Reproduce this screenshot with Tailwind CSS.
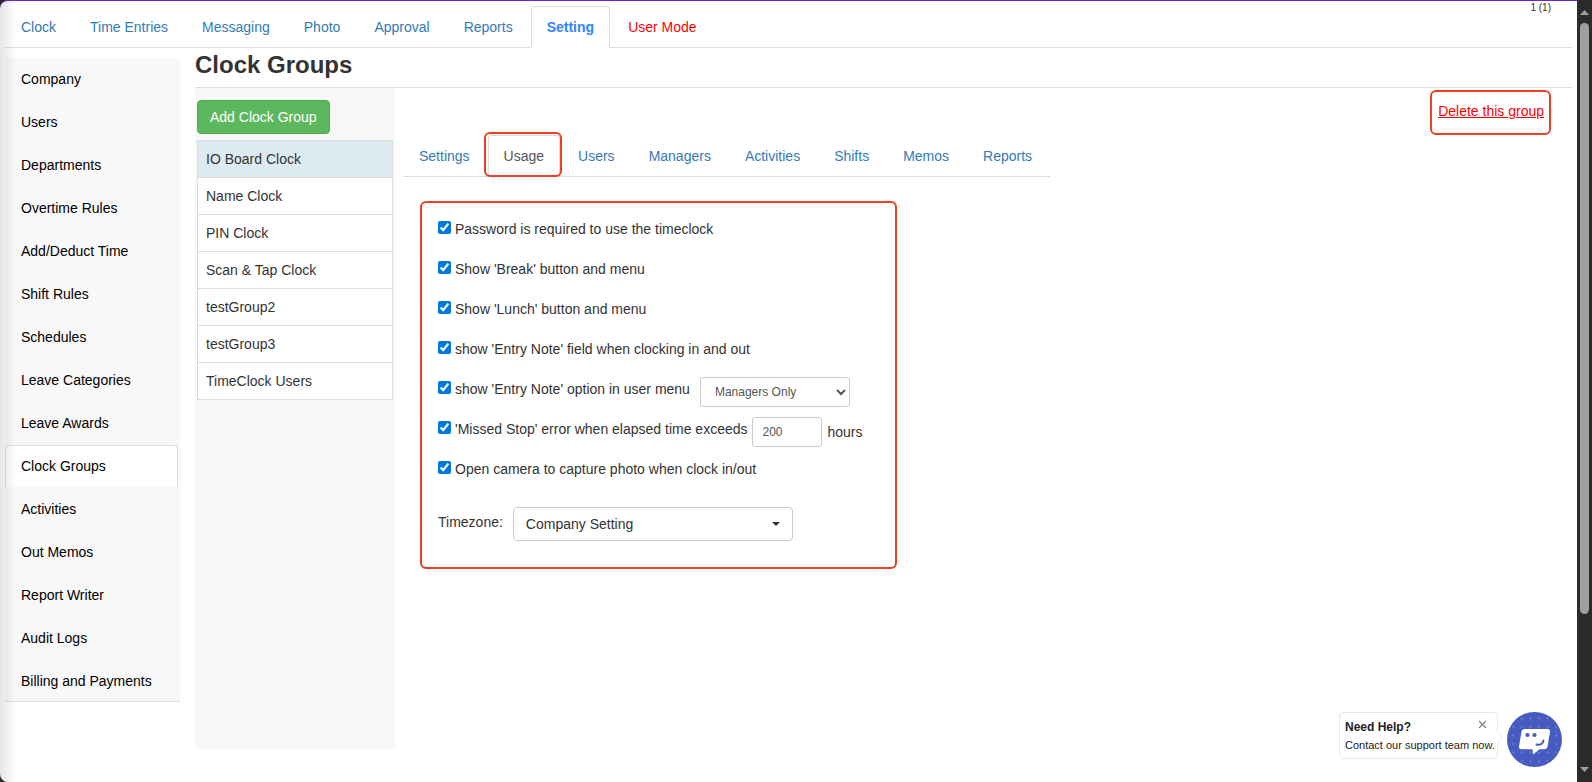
<!DOCTYPE html>
<html lang="en">
<head>
<meta charset="utf-8">
<title>Clock Groups</title>
<script src="https://cdn.jsdelivr.net/npm/@tailwindcss/browser@4"></script>
</head>
<body class="flex h-screen overflow-hidden bg-[#2b2b2b] font-['Liberation_Sans',Arial,sans-serif] text-sm leading-5 text-[#333]">

<div class="relative flex min-w-0 flex-1 flex-col overflow-hidden rounded-l-lg border-t border-[#6427d8] bg-white pl-[5px] pr-[5px] pt-[5px]">
  <div class="pointer-events-none absolute inset-y-0 left-0 z-10 w-4 bg-linear-to-r from-black/10 to-transparent"></div>
  <span class="absolute right-[26px] top-0 text-[10px] leading-[14px]">1 (1)</span>

  <nav aria-label="Main" class="flex shrink-0 gap-[2px] border-b border-[#ddd]">
    <a href="#" class="-mb-px border border-transparent px-[15px] py-[10px] text-[#337ab7]">Clock</a>
    <a href="#" class="-mb-px border border-transparent px-[15px] py-[10px] text-[#337ab7]">Time Entries</a>
    <a href="#" class="-mb-px border border-transparent px-[15px] py-[10px] text-[#337ab7]">Messaging</a>
    <a href="#" class="-mb-px border border-transparent px-[15px] py-[10px] text-[#337ab7]">Photo</a>
    <a href="#" class="-mb-px border border-transparent px-[15px] py-[10px] text-[#337ab7]">Approval</a>
    <a href="#" class="-mb-px border border-transparent px-[15px] py-[10px] text-[#337ab7]">Reports</a>
    <a href="#" aria-current="page" class="-mb-px rounded-t border border-[#ddd] border-b-white bg-white px-[15px] py-[10px] font-bold text-[#2e86ff]">Setting</a>
    <a href="#" class="-mb-px border border-transparent px-[15px] py-[10px] text-[#ff0000]">User Mode</a>
  </nav>

  <div class="flex min-h-0 flex-1 gap-[15px]">
    <nav aria-label="Settings" class="mt-[10px] flex w-[175px] shrink-0 flex-col gap-px self-start border-b border-[#ddd] bg-[#f8f8f8] text-black">
      <a href="#" class="mr-[2px] border border-transparent px-[15px] py-[10px]">Company</a>
      <a href="#" class="mr-[2px] border border-transparent px-[15px] py-[10px]">Users</a>
      <a href="#" class="mr-[2px] border border-transparent px-[15px] py-[10px]">Departments</a>
      <a href="#" class="mr-[2px] border border-transparent px-[15px] py-[10px]">Overtime Rules</a>
      <a href="#" class="mr-[2px] border border-transparent px-[15px] py-[10px]">Add/Deduct Time</a>
      <a href="#" class="mr-[2px] border border-transparent px-[15px] py-[10px]">Shift Rules</a>
      <a href="#" class="mr-[2px] border border-transparent px-[15px] py-[10px]">Schedules</a>
      <a href="#" class="mr-[2px] border border-transparent px-[15px] py-[10px]">Leave Categories</a>
      <a href="#" class="mr-[2px] border border-transparent px-[15px] py-[10px]">Leave Awards</a>
      <a href="#" aria-current="page" class="mr-[2px] rounded-t border border-[#ddd] border-b-transparent bg-white px-[15px] py-[10px]">Clock Groups</a>
      <a href="#" class="mr-[2px] border border-transparent px-[15px] py-[10px]">Activities</a>
      <a href="#" class="mr-[2px] border border-transparent px-[15px] py-[10px]">Out Memos</a>
      <a href="#" class="mr-[2px] border border-transparent px-[15px] py-[10px]">Report Writer</a>
      <a href="#" class="mr-[2px] border border-transparent px-[15px] py-[10px]">Audit Logs</a>
      <a href="#" class="-mb-px mr-[2px] border border-transparent px-[15px] py-[10px]">Billing and Payments</a>
    </nav>

    <main class="flex min-w-0 flex-1 flex-col pb-[33px]">
      <h1 class="border-b border-[#ddd] pb-2 pt-[3px] text-2xl leading-7 font-bold">Clock Groups</h1>
      <div class="flex min-h-0 flex-1">
        <section aria-label="Clock group list" class="w-[200px] shrink-0 bg-[#f8f8f8] px-[2px] pt-3">
          <button type="button" class="rounded border border-[#4cae4c] bg-[#5cb85c] px-3 py-[6px] text-white">Add Clock Group</button>
          <ul class="mt-[6px] divide-y divide-[#ddd] border border-[#ddd] bg-white">
            <li class="bg-[#deeaf2]"><a href="#" class="block p-2">IO Board Clock</a></li>
            <li><a href="#" class="block p-2">Name Clock</a></li>
            <li><a href="#" class="block p-2">PIN Clock</a></li>
            <li><a href="#" class="block p-2">Scan &amp; Tap Clock</a></li>
            <li><a href="#" class="block p-2">testGroup2</a></li>
            <li><a href="#" class="block p-2">testGroup3</a></li>
            <li><a href="#" class="block p-2">TimeClock Users</a></li>
          </ul>
        </section>

        <section aria-label="Group settings" class="flex min-w-0 flex-1 flex-col items-start pl-2 pr-[21px] pt-[2px]">
          <a href="#" class="self-end rounded-md border-2 border-[#ee3f24] pb-3 pl-[6px] pr-[5px] pt-[9px] text-[#ff0000] underline">Delete this group</a>

          <nav aria-label="Group" class="flex gap-[2px] border-b border-[#ddd] pr-[2px]">
            <a href="#" class="-mb-px border border-transparent px-[15px] py-[10px] text-[#337ab7]">Settings</a>
            <a href="#" aria-current="page" class="relative -mb-px rounded-t border border-[#ddd] border-b-transparent bg-white px-[15px] py-[10px] text-[#555]">Usage
              <span class="absolute -bottom-px -left-[5px] -right-[3px] -top-1 rounded-md border-2 border-[#ee3f24]"></span>
            </a>
            <a href="#" class="-mb-px border border-transparent px-[15px] py-[10px] text-[#337ab7]">Users</a>
            <a href="#" class="-mb-px border border-transparent px-[15px] py-[10px] text-[#337ab7]">Managers</a>
            <a href="#" class="-mb-px border border-transparent px-[15px] py-[10px] text-[#337ab7]">Activities</a>
            <a href="#" class="-mb-px border border-transparent px-[15px] py-[10px] text-[#337ab7]">Shifts</a>
            <a href="#" class="-mb-px border border-transparent px-[15px] py-[10px] text-[#337ab7]">Memos</a>
            <a href="#" class="-mb-px border border-transparent px-[15px] py-[10px] text-[#337ab7]">Reports</a>
          </nav>

          <form class="ml-[17px] mt-6 w-[477px] rounded-md border-2 border-[#ee3f24] pb-[26px] pl-4 pt-4">
            <div class="flex h-10 items-start"><label class="flex gap-1"><input type="checkbox" checked class="mt-[2px] size-[13px] accent-[#0078d7]">Password is required to use the timeclock</label></div>
            <div class="flex h-10 items-start"><label class="flex gap-1"><input type="checkbox" checked class="mt-[2px] size-[13px] accent-[#0078d7]">Show 'Break' button and menu</label></div>
            <div class="flex h-10 items-start"><label class="flex gap-1"><input type="checkbox" checked class="mt-[2px] size-[13px] accent-[#0078d7]">Show 'Lunch' button and menu</label></div>
            <div class="flex h-10 items-start"><label class="flex gap-1"><input type="checkbox" checked class="mt-[2px] size-[13px] accent-[#0078d7]">show 'Entry Note' field when clocking in and out</label></div>
            <div class="flex h-10 items-start gap-[10px]">
              <label class="flex gap-1"><input type="checkbox" checked class="mt-[2px] size-[13px] accent-[#0078d7]">show 'Entry Note' option in user menu</label>
              <select aria-label="Entry Note menu access" class="-mt-[2px] h-[30px] w-[150px] rounded-[3px] border border-[#ccc] bg-white px-[10px] text-xs text-[#555]"><option>Managers Only</option></select>
            </div>
            <div class="flex h-10 items-start gap-1">
              <label class="flex gap-1"><input type="checkbox" checked class="mt-[2px] size-[13px] accent-[#0078d7]">'Missed Stop' error when elapsed time exceeds</label>
              <input type="text" id="hours" value="200" class="-mt-[2px] h-[30px] w-[70px] rounded-[3px] border border-[#ccc] bg-white px-[10px] text-xs text-[#555]">
              <label for="hours" class="ml-[2px] mt-[3px]">hours</label>
            </div>
            <div class="flex h-10 items-start"><label class="flex gap-1"><input type="checkbox" checked class="mt-[2px] size-[13px] accent-[#0078d7]">Open camera to capture photo when clock in/out</label></div>
            <div class="mt-2 flex gap-[10px]">
              <label for="timezone" class="mt-[5px]">Timezone:</label>
              <div class="relative">
                <select id="timezone" class="h-[34px] w-[280px] appearance-none rounded border border-[#ccc] bg-white px-3"><option>Company Setting</option></select>
                <svg class="pointer-events-none absolute right-[13px] top-[15px] h-1 w-2" viewBox="0 0 8 4" fill="#333" aria-hidden="true"><path d="M0 0h8L4 4z"/></svg>
              </div>
            </div>
          </form>
        </section>
      </div>
    </main>
  </div>

  <aside aria-label="Support" class="absolute bottom-[15px] right-[15px] flex items-start gap-[9px] text-[#222]">
    <div class="relative w-[159px] rounded border border-[#e6e8f0] bg-white px-[5px] pb-[5px] pt-1 text-[11px] leading-4">
      <div class="flex items-start justify-between">
        <b class="text-xs leading-5">Need Help?</b>
        <button type="button" aria-label="Close" class="mr-[5px] mt-[3px]"><svg class="size-[9px]" viewBox="0 0 9 9" fill="none" stroke="#888" stroke-width="1.4"><path d="M1 1l7 7M8 1L1 8"/></svg></button>
      </div>
      <p class="whitespace-nowrap">Contact our support team now.</p>
      <svg class="absolute -right-[7px] top-[19px] h-3 w-[7px]" viewBox="0 0 7 12" fill="#fff" stroke="#e6e8f0" aria-hidden="true"><path d="M0 0l6 6-6 6"/></svg>
    </div>
    <button type="button" aria-label="Open chat" class="size-[55px]">
      <svg viewBox="0 0 55 55" aria-hidden="true">
        <defs><pattern id="dots" width="8.6" height="8.6" x="1.9" y="1.900" patternUnits="userSpaceOnUse"><circle cx="4.3" cy="4.3" r="0.9" fill="#8190d8"/></pattern></defs>
        <circle cx="27.5" cy="27.5" r="27.5" fill="#485bc0"/>
        <circle cx="27.5" cy="27.5" r="26" fill="url(#dots)"/>
        <path d="M18 17h22.500q3 0 2.500 3l-2.500 14.500q-.5 2.800-3.500 2.800h-4.500L26 42.500l-.5-5.200H14.500q-3 0-2.500-3l2.500-14.500q.5-2.800 3.500-2.800z" fill="#fff"/>
        <circle cx="20.500" cy="23" r="2.100" fill="#485bc0"/><circle cx="27.500" cy="23" r="2.100" fill="#485bc0"/>
        <path d="M29.500 32.500c3.500 1 6.500-.5 7-4" fill="none" stroke="#485bc0" stroke-width="1.900" stroke-linecap="round"/>
      </svg>
    </button>
  </aside>
</div>

<div class="flex w-[15px] shrink-0 flex-col items-center pb-[10px] pt-[10px]" aria-hidden="true">
  <svg class="h-[5px] w-[9px] shrink-0" viewBox="0 0 9 5" fill="#9f9f9f"><path d="M4.500 0L9 5H0z"/></svg>
  <div class="mt-2 w-[9px] flex-[591] rounded-full bg-[#9f9f9f]"></div>
  <div class="flex-[153]"></div>
  <svg class="h-[5px] w-[9px] shrink-0" viewBox="0 0 9 5" fill="#9f9f9f"><path d="M0 0h9L4.500 5z"/></svg>
</div>

</body>
</html>
